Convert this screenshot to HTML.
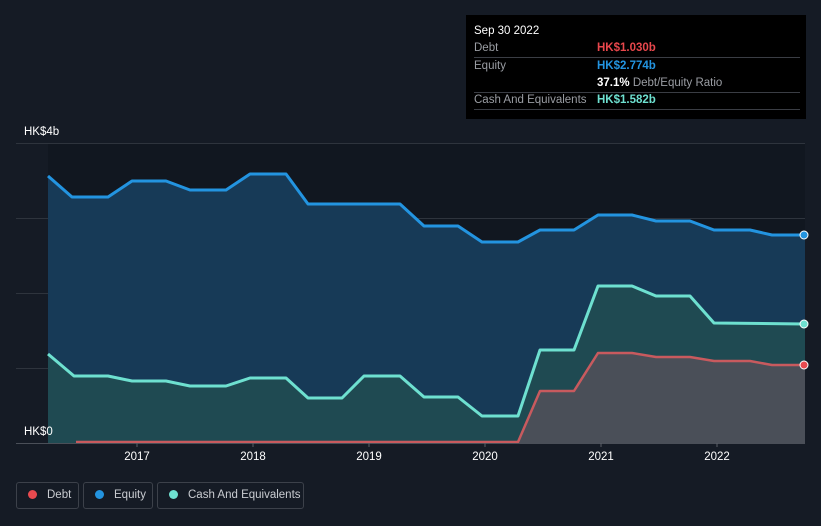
<!DOCTYPE html>
<html><head><style>
html,body{margin:0;width:821px;height:526px;overflow:hidden}
body{background:#151b25;font-family:"Liberation Sans",sans-serif;position:relative}
.tip{position:absolute;left:466px;top:15px;width:340px;height:104px;background:#000;color:#fff;font-size:11.5px}
.tip .r{position:absolute;left:8px;width:326px;border-bottom:1px solid #3a3d44;height:17px;line-height:16px;white-space:nowrap}
.lab{color:#9a9da3}
.leg{position:absolute;top:482px;height:27px;border:1px solid #3c414a;border-radius:3px;color:#c9ccd1;font-size:11.5px;line-height:25px;box-sizing:border-box;white-space:nowrap;overflow:hidden}
.dot{display:inline-block;width:9px;height:9px;border-radius:50%;vertical-align:-1px;margin:0 10px 0 11px}
</style></head><body>
<svg width="821" height="526" style="position:absolute;left:0;top:0">
<rect x="48" y="143" width="757" height="300" fill="#111720"/>
<g stroke="#2e343d" stroke-width="1"><line x1="16" y1="143.5" x2="805" y2="143.5"/><line x1="16" y1="218.5" x2="805" y2="218.5"/><line x1="16" y1="293.5" x2="805" y2="293.5"/><line x1="16" y1="368.5" x2="805" y2="368.5"/></g>
<path d="M48,176 L72,197 L108,197 L132,181 L166,181 L190,190 L226,190 L250,174 L286,174 L308,204 L400,204 L424,226 L458,226 L482,242 L518,242 L540,230 L574,230 L598,215 L632,215 L656,221 L690,221 L714,230 L750,230 L772,235 L805,235 L805,443 L48,443Z" fill="#173a57"/>
<path d="M48,354 L74,376 L108,376 L132,381 L166,381 L190,386 L226,386 L250,378 L286,378 L308,398 L342,398 L364,376 L400,376 L424,397 L458,397 L482,416 L518,416 L540,350 L574,350 L598,286 L632,286 L656,296 L690,296 L714,323 L805,324 L805,443 L48,443Z" fill="#1f4a52"/>
<path d="M76,442 L518,442 L540,391 L574,391 L598,353 L632,353 L656,357 L690,357 L714,361 L750,361 L772,365 L805,365 L805,443 L76,443Z" fill="#4a4f58"/>
<g fill="none" stroke-width="3" stroke-linejoin="round">
<path d="M48,176 L72,197 L108,197 L132,181 L166,181 L190,190 L226,190 L250,174 L286,174 L308,204 L400,204 L424,226 L458,226 L482,242 L518,242 L540,230 L574,230 L598,215 L632,215 L656,221 L690,221 L714,230 L750,230 L772,235 L805,235" stroke="#2394e0"/>
<path d="M48,354 L74,376 L108,376 L132,381 L166,381 L190,386 L226,386 L250,378 L286,378 L308,398 L342,398 L364,376 L400,376 L424,397 L458,397 L482,416 L518,416 L540,350 L574,350 L598,286 L632,286 L656,296 L690,296 L714,323 L805,324" stroke="#6ee0d0"/>
<path d="M76,442 L518,442 L540,391 L574,391 L598,353 L632,353 L656,357 L690,357 L714,361 L750,361 L772,365 L805,365" stroke="#c85a5e" stroke-width="2.5"/>
</g>
<line x1="16" y1="443.5" x2="805" y2="443.5" stroke="#4a4f58"/>
<circle cx="804" cy="235" r="4" fill="#2394e0" stroke="#fff" stroke-width="1"/>
<circle cx="804" cy="324" r="4" fill="#6ee0d0" stroke="#fff" stroke-width="1"/>
<circle cx="804" cy="365" r="4" fill="#e84a4f" stroke="#fff" stroke-width="1"/>
<g fill="#fff" font-size="11.5" font-family="Liberation Sans"><text x="24" y="135">HK$4b</text><text x="24" y="435">HK$0</text>
<g text-anchor="middle"><text x="137" y="460">2017</text><text x="253" y="460">2018</text><text x="369" y="460">2019</text><text x="485" y="460">2020</text><text x="601" y="460">2021</text><text x="717" y="460">2022</text></g></g>
<g stroke="#5a5f68"><line x1="137" y1="443" x2="137" y2="447"/><line x1="253" y1="443" x2="253" y2="447"/><line x1="369" y1="443" x2="369" y2="447"/><line x1="485" y1="443" x2="485" y2="447"/><line x1="601" y1="443" x2="601" y2="447"/><line x1="717" y1="443" x2="717" y2="447"/></g>
</svg>
<div class="tip">
<div style="position:absolute;left:8px;top:10px">Sep 30 2022</div>
<div class="r" style="top:25px"><span class="lab">Debt</span><span style="position:absolute;left:123px;color:#e8474c;font-weight:bold">HK$1.030b</span></div>
<div class="r" style="top:43px;border:none"><span class="lab">Equity</span><span style="position:absolute;left:123px;color:#2394e0;font-weight:bold">HK$2.774b</span></div>
<div class="r" style="top:60px"><span style="position:absolute;left:123px"><b>37.1%</b> <span class="lab">Debt/Equity Ratio</span></span></div>
<div class="r" style="top:77px"><span class="lab">Cash And Equivalents</span><span style="position:absolute;left:123px;color:#6ee0d0;font-weight:bold">HK$1.582b</span></div>
</div>
<div class="leg" style="left:16px;width:63px"><span class="dot" style="background:#e84a4f"></span>Debt</div>
<div class="leg" style="left:83px;width:70px"><span class="dot" style="background:#2394e0"></span>Equity</div>
<div class="leg" style="left:157px;width:147px"><span class="dot" style="background:#6ee0d0"></span>Cash And Equivalents</div>
</body></html>
